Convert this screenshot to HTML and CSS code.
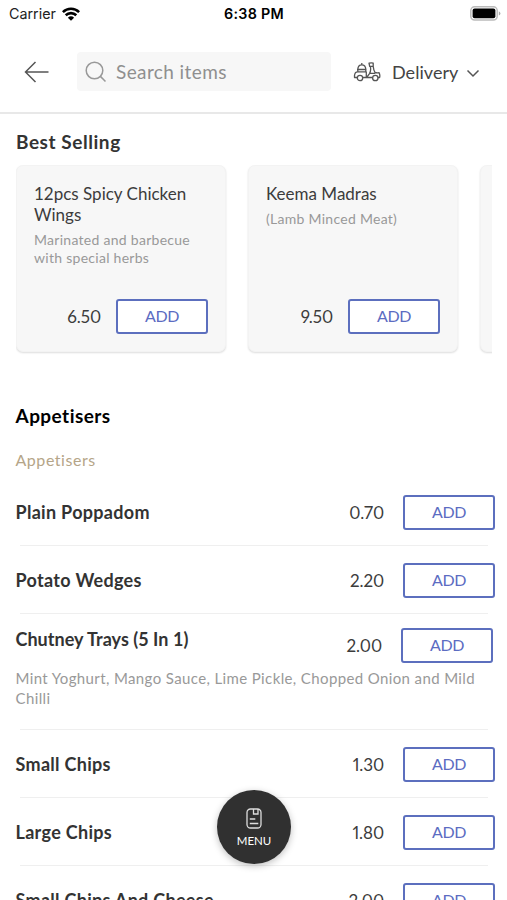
FILE: index.html
```html
<!DOCTYPE html>
<html lang="en">
<head>
<meta charset="utf-8">
<title>Menu</title>
<link rel="stylesheet" href="styles.css">
</head>
<body>
<div class="screen">
  <div class="status">
    <div class="carrier"><span>Carrier</span>
      <svg width="18" height="14" viewBox="0 0 18 14" fill="none" stroke="#000" stroke-width="2.6"><path d="M.9 5.100a11.600 11.600 0 0 1 16.200 0M3.700 8.300a7.600 7.600 0 0 1 10.600 0"/><path d="M9 13.700L5.900 10.800a4.500 4.500 0 0 1 6.200 0z" fill="#000" stroke="none"/></svg>
    </div>
    <div class="time">6:38 PM</div>
    <svg class="battery" width="31" height="15" viewBox="0 0 31 15"><rect x=".8" y=".8" width="26.400" height="13.200" rx="3.800" fill="#fff" stroke="#bbb" stroke-width="1.500"/><rect x="2.600" y="2.500" width="22.800" height="9.800" rx="2"/><path d="M28.800 5.200q1.600.8 1.600 2.200t-1.600 2.200z" fill="#aaa"/></svg>
  </div>
  <header class="bar">
    <svg class="back" width="26" height="22" viewBox="0 0 26 22" fill="none" stroke="#555" stroke-width="1.500"><path d="M24.500 11H1.500M11.500 1L1.500 11l10 10"/></svg>
    <div class="search">
      <svg width="22" height="22" viewBox="0 0 22 22" fill="none" stroke="#999" stroke-width="1.500"><circle cx="9.500" cy="9.500" r="8.300"/><path d="M15.400 15.400L20.500 20.500"/></svg>
      <span>Search items</span>
    </div>
    <div class="mode">
      <svg width="28" height="20" viewBox="0 0 28 20" fill="none" stroke="#555" stroke-width="1.300" stroke-linejoin="round"><path d="M4.800 9.500V7.500Q5 2.800 8.800 2.800t4 4.700v2M4 7.500h9.500M8.800 2.800V1M4.500 9.800h8.800v5.700H10M4.200 15.500H1.500V13.500q.4-3.700 3-3.700"/><circle cx="7" cy="16" r="2.700"/><path d="M16 1.200q3-.6 4.200 0v3.200h-3.500zM17.300 4.400q1 4-.8 7.200l-2.900 3.900h6M20.200 4.400q.4 4 1.800 6 2.200 1 4 .2 1.300 2.400.6 4.900h-1.600M16.500 11.300h5.800"/><circle cx="22.300" cy="16" r="2.700"/></svg>
      <span>Delivery</span>
      <svg class="chev" width="14" height="9" viewBox="0 0 14 9" fill="none" stroke="#555" stroke-width="1.500"><path d="M1.500 1.500L7 7l5.500-5.500"/></svg>
    </div>
  </header>
  <section class="best">
    <h2>Best Selling</h2>
    <div class="cards">
      <article class="card"><h3>12pcs Spicy Chicken Wings</h3><p>Marinated and barbecue with special herbs</p><div class="buy"><span class="price">6.50</span><button class="add">ADD</button></div></article>
      <article class="card"><h3>Keema Madras</h3><p>(Lamb Minced Meat)</p><div class="buy"><span class="price">9.50</span><button class="add">ADD</button></div></article>
      <article class="card"></article>
    </div>
  </section>
  <section class="list">
    <h2>Appetisers</h2>
    <h4>Appetisers</h4>
    <div class="item"><h3>Plain Poppadom</h3><span class="price">0.70</span><button class="add">ADD</button></div>
    <div class="item"><h3>Potato Wedges</h3><span class="price">2.20</span><button class="add">ADD</button></div>
    <div class="item detailed"><h3>Chutney Trays (5 In 1)</h3><span class="price">2.00</span><button class="add">ADD</button><p>Mint Yoghurt, Mango Sauce, Lime Pickle, Chopped Onion and Mild Chilli</p></div>
    <div class="item"><h3>Small Chips</h3><span class="price">1.30</span><button class="add">ADD</button></div>
    <div class="item"><h3>Large Chips</h3><span class="price">1.80</span><button class="add">ADD</button></div>
    <div class="item"><h3>Small Chips And Cheese</h3><span class="price">2.00</span><button class="add">ADD</button></div>
  </section>
  <button class="menu">
    <svg width="16" height="21" viewBox="0 0 16 21" fill="none" stroke="#ddd" stroke-width="1.300"><rect x="1" y="1" width="14" height="19" rx="3.500"/><path d="M7.500 1v5H12V1M3.800 11h5.500M3.800 15.500h8.500"/></svg>
    <span>MENU</span>
  </button>
</div>
</body>
</html>
```
FILE: styles.css
```css
* { box-sizing: border-box; margin: 0; padding: 0; }
body { background: #fff; overflow: hidden; font-family: Lato, sans-serif; font-variant-ligatures: none; color: #333; }
.screen { width: 507px; height: 900px; overflow: hidden; position: relative; }
button { font-family: inherit; }
.status { height: 27px; padding: 0 7px 0 9px; display: grid; grid-template-columns: 1fr auto 1fr; align-items: center; font-family: Inter, sans-serif; font-size: 14.300px; color: #222; }
.carrier { display: flex; align-items: center; gap: 6px; }
.time { font-weight: 600; color: #000; letter-spacing: .3px; margin-right: 1px; }
.battery { justify-self: end; margin-right: -1px; }
.bar { height: 87px; border-bottom: 2px solid #e8e8e8; display: flex; align-items: center; padding: 4px 26px 0 24px; }
.back { flex: none; margin-right: 27px; }
.search { flex: none; width: 254px; height: 39px; background: #f7f7f7; border-radius: 4px; display: flex; align-items: center; gap: 9px; padding-left: 8px; font-size: 19px; color: #8f8f8f; letter-spacing: .4px; }
.mode { display: flex; align-items: center; margin-left: 22px; font-size: 18px; color: #444; }
.mode span { margin-left: 11px; letter-spacing: .05px; }
.chev { margin-left: 8px; margin-top: 3px; }
.best { padding: 16px 15px 0 16px; height: 286px; }
h2 { font-size: 19px; line-height: 24px; font-weight: 700; letter-spacing: .55px; }
.cards { display: flex; gap: 22px; overflow: hidden; margin-top: 11px; height: 192px; }
.card { flex: 0 0 210px; height: 187px; border: 1px solid #f3f3f3; background: #f7f7f7; border-radius: 7px; box-shadow: 0 1px 2px #ddd; padding: 17px 17px 17px; display: flex; flex-direction: column; }
.card h3 { font-size: 17px; line-height: 21px; font-weight: 400; color: #3c3c3c; }
.card p { font-size: 14px; line-height: 17.500px; color: #999; margin-top: 6px; letter-spacing: .28px; }
.buy { margin-top: auto; display: flex; justify-content: flex-end; align-items: center; gap: 15px; }
.price { font-size: 17px; color: #3c3c3c; font-variant-numeric: proportional-nums; letter-spacing: -.1px; }
.add { width: 92px; height: 35px; padding-bottom: 2px; background: #fff; border: 2px solid #5c6fbe; border-radius: 3px; color: #5c6cc2; font-size: 16px; letter-spacing: -.4px; }
.list { padding: 4px 12px 0 15.500px; }
.list h2 { color: #000; letter-spacing: .45px; }
.list h4 { font-size: 16px; line-height: 20px; margin-top: 22px; font-weight: 400; color: #b5a588; letter-spacing: .55px; }
.item { height: 68px; display: grid; grid-template-columns: 1fr auto 92px; column-gap: 19px; align-items: center; position: relative; }
.list h4 + .item { margin-top: 8px; }
.item::after { content: ""; position: absolute; left: 4px; right: 7px; bottom: 0; height: 1px; background: #efefef; }
.item h3 { font-size: 18px; font-weight: 700; line-height: 22px; letter-spacing: .3px; }
.item.detailed { height: 116px; grid-template-rows: 35px auto; padding: 14px 2px 0 0; align-content: start; }
.item.detailed h3 { align-self: start; letter-spacing: .03px; }
.detailed p { grid-column: 1 / -1; font-size: 15px; line-height: 19.500px; color: #999; margin-top: 6px; letter-spacing: .38px; }
.menu { position: absolute; left: 217px; top: 790px; width: 74px; height: 74px; border: 0; border-radius: 50%; background: #303030; box-shadow: 0 2px 7px rgba(0,0,0,.25); color: #fff; display: flex; flex-direction: column; align-items: center; justify-content: center; gap: 5px; font-size: 11.500px; }
```
